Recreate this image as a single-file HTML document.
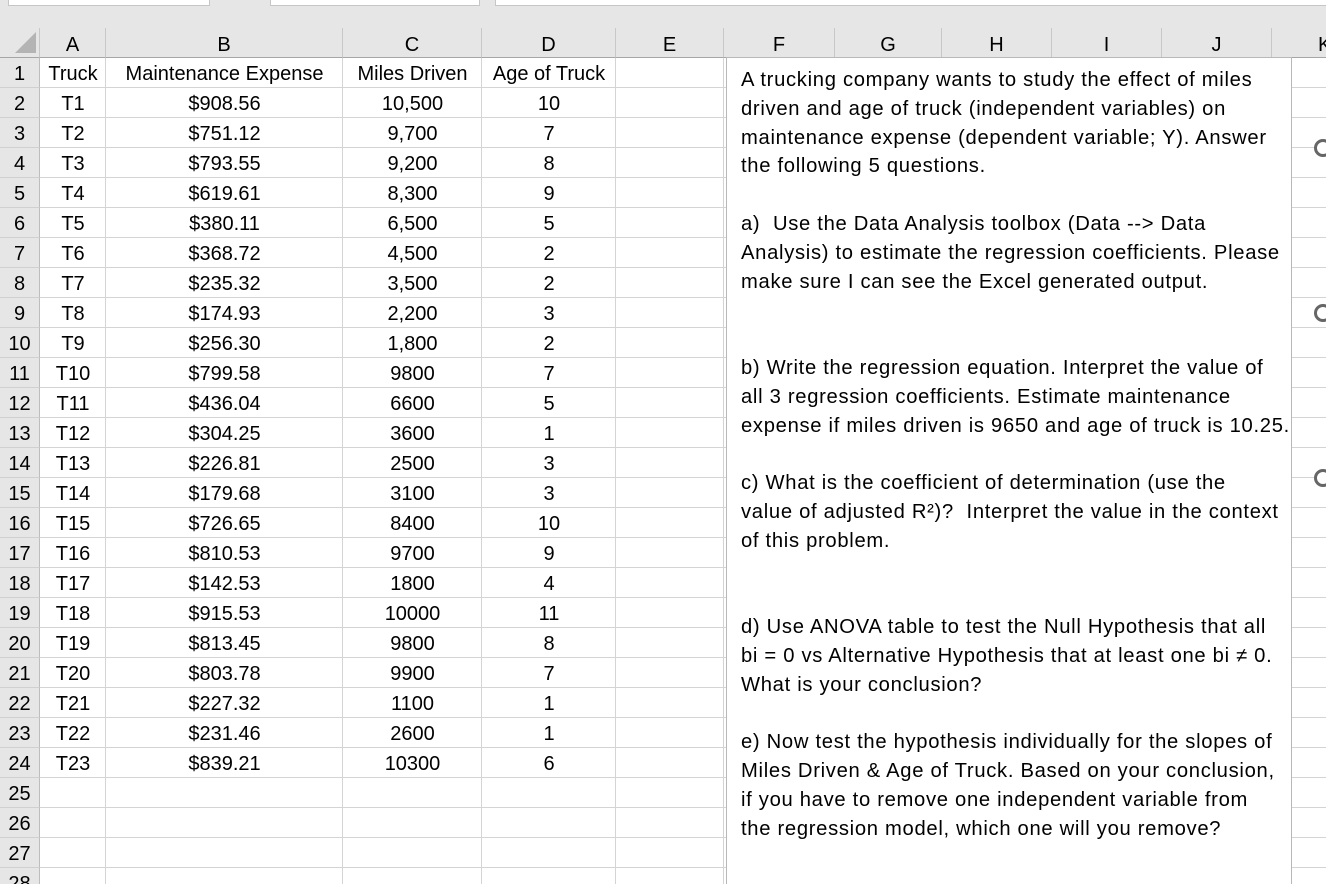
<!DOCTYPE html>
<html style="width:1326px;height:884px;overflow:hidden"><head><style>
*{margin:0;padding:0;box-sizing:border-box}
body{width:1326px;height:884px;overflow:hidden;background:#fff;position:relative;font-family:"Liberation Sans",sans-serif;color:#000}
.a{position:absolute}
.hl{position:absolute;height:1px;background:#d4d4d4}
.vl{position:absolute;width:1px;background:#d4d4d4}
.c{position:absolute;height:30px;line-height:32px;font-size:20px;text-align:center;white-space:nowrap}
.rh{position:absolute;left:0;width:40px;height:30px;line-height:32px;font-size:20px;text-align:center;background:#e6e6e6;border-right:1px solid #bdbdbd;border-bottom:1px solid #d0d0d0}
.ch{position:absolute;top:28px;height:30px;line-height:34px;font-size:20px;text-align:center;background:#e6e6e6;border-right:1px solid #c8c8c8;border-bottom:1px solid #a6a6a6}
.tb{position:absolute;left:726px;top:57px;width:566px;height:827px;background:#fff;border:1px solid #b8b8b8;border-bottom:none;font-size:20.2px;line-height:28.8px;letter-spacing:0.7px;padding:8px 0 0 14px;overflow:hidden}
.tb p{white-space:nowrap}
.circ{position:absolute;left:1314px;width:18px;height:18px;border:3px solid #666;border-radius:50%;background:#fff}
</style></head><body>
<div class="a" style="left:0;top:0;width:1326px;height:28px;background:#e6e6e6"></div>
<div class="a" style="left:8px;top:0;width:202px;height:6px;background:#fff;border:1px solid #c6c6c6;border-top:none"></div>
<div class="a" style="left:270px;top:0;width:210px;height:6px;background:#fff;border:1px solid #c6c6c6;border-top:none"></div>
<div class="a" style="left:495px;top:0;width:831px;height:6px;background:#fff;border:1px solid #c6c6c6;border-top:none;border-right:none"></div>
<div class="ch" style="left:0;width:40px"><svg width="40" height="30" style="position:absolute;left:0;top:0"><polygon points="36,4 36,25 15,25" fill="#b4b4b4"/></svg></div>
<div class="ch" style="left:40px;width:66px">A</div>
<div class="ch" style="left:106px;width:237px">B</div>
<div class="ch" style="left:343px;width:139px">C</div>
<div class="ch" style="left:482px;width:134px">D</div>
<div class="ch" style="left:616px;width:108px">E</div>
<div class="ch" style="left:724px;width:111px">F</div>
<div class="ch" style="left:835px;width:107px">G</div>
<div class="ch" style="left:942px;width:110px">H</div>
<div class="ch" style="left:1052px;width:110px">I</div>
<div class="ch" style="left:1162px;width:110px">J</div>
<div class="ch" style="left:1272px;width:110px;text-align:left;padding-left:46px">K</div>
<div id="g"></div>
<script>
var d=[["Truck","Maintenance Expense","Miles Driven","Age of Truck"],
["T1","$908.56","10,500","10"],["T2","$751.12","9,700","7"],["T3","$793.55","9,200","8"],["T4","$619.61","8,300","9"],["T5","$380.11","6,500","5"],["T6","$368.72","4,500","2"],["T7","$235.32","3,500","2"],["T8","$174.93","2,200","3"],["T9","$256.30","1,800","2"],["T10","$799.58","9800","7"],["T11","$436.04","6600","5"],["T12","$304.25","3600","1"],["T13","$226.81","2500","3"],["T14","$179.68","3100","3"],["T15","$726.65","8400","10"],["T16","$810.53","9700","9"],["T17","$142.53","1800","4"],["T18","$915.53","10000","11"],["T19","$813.45","9800","8"],["T20","$803.78","9900","7"],["T21","$227.32","1100","1"],["T22","$231.46","2600","1"],["T23","$839.21","10300","6"]];
var cols=[[40,66],[106,237],[343,139],[482,134]];
var h="";
[106,343,482,616,724].forEach(function(x){h+='<div class="vl" style="left:'+(x-1)+'px;top:58px;height:826px"></div>'});
for(var r=0;r<28;r++){var y=58+r*30;
h+='<div class="hl" style="left:40px;top:'+(y+29)+'px;width:1286px"></div>';
h+='<div class="rh" style="top:'+y+'px">'+(r+1)+'</div>';
if(d[r])for(var c=0;c<4;c++)h+='<div class="c" style="left:'+cols[c][0]+'px;top:'+y+'px;width:'+cols[c][1]+'px">'+d[r][c]+'</div>';}
document.getElementById("g").innerHTML=h;
</script>
<div class="tb">
<p>A trucking company wants to study the effect of miles</p>
<p>driven and age of truck (independent variables) on</p>
<p>maintenance expense (dependent variable; Y). Answer</p>
<p>the following 5 questions.</p>
<p>&nbsp;</p>
<p>a)&nbsp; Use the Data Analysis toolbox (Data --&gt; Data</p>
<p>Analysis) to estimate the regression coefficients. Please</p>
<p>make sure I can see the Excel generated output.</p>
<p>&nbsp;</p><p>&nbsp;</p>
<p>b) Write the regression equation. Interpret the value of</p>
<p>all 3 regression coefficients. Estimate maintenance</p>
<p>expense if miles driven is 9650 and age of truck is 10.25.</p>
<p>&nbsp;</p>
<p>c) What is the coefficient of determination (use the</p>
<p>value of adjusted R²)?&nbsp; Interpret the value in the context</p>
<p>of this problem.</p>
<p>&nbsp;</p><p>&nbsp;</p>
<p>d) Use ANOVA table to test the Null Hypothesis that all</p>
<p>bi = 0 vs Alternative Hypothesis that at least one bi ≠ 0.</p>
<p>What is your conclusion?</p>
<p>&nbsp;</p>
<p>e) Now test the hypothesis individually for the slopes of</p>
<p>Miles Driven &amp; Age of Truck. Based on your conclusion,</p>
<p>if you have to remove one independent variable from</p>
<p>the regression model, which one will you remove?</p>
</div>
<div class="circ" style="top:139px"></div>
<div class="circ" style="top:304px"></div>
<div class="circ" style="top:469px"></div>
</body></html>
